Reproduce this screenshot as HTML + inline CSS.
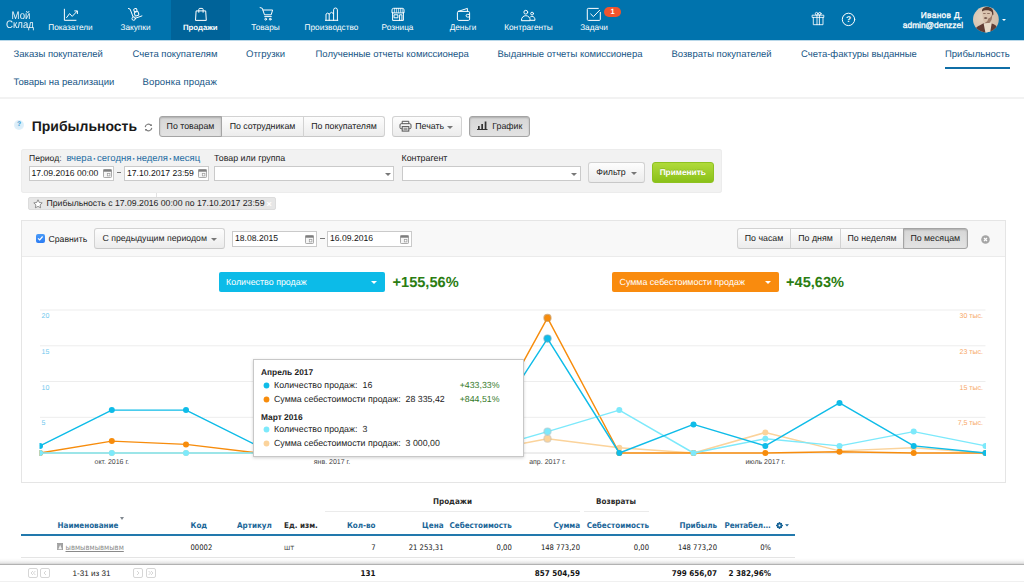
<!DOCTYPE html>
<html lang="ru">
<head>
<meta charset="utf-8">
<title>МойСклад — Прибыльность</title>
<style>
*{box-sizing:border-box;margin:0;padding:0}
html,body{width:1024px;height:582px;overflow:hidden;background:#fff}
body{text-rendering:geometricPrecision;position:relative;font-family:"Liberation Sans","DejaVu Sans",sans-serif;font-size:9.3px;color:#222;line-height:1}
.abs{position:absolute;white-space:nowrap}
/* top bar */
#top{position:absolute;left:0;top:0;width:1024px;height:40px;background:#0073ad}
#top .act{position:absolute;left:171px;top:0;width:59px;height:40px;background:#006399}
.nl{position:absolute;top:22.5px;width:80px;margin-left:-40px;text-align:center;color:#fff;font-size:8.25px;line-height:9px;white-space:nowrap}
.ni{position:absolute;top:6px;width:18px;height:18px;margin-left:-9px}
.ni svg{display:block;width:18px;height:18px;overflow:visible}
/* subnav */
#sub{position:absolute;left:0;top:40px;width:1024px;height:59px;background:#fff;border-top:1px solid #b9d8e9;border-bottom:2px solid #f2f2f2}
.sl{position:absolute;margin-top:-1px;color:#175686;font-size:9.5px;line-height:11px;white-space:nowrap}
/* buttons */
.btn{position:absolute;height:21px;border:1px solid #d2d2d2;border-bottom-color:#c8c8c8;background:linear-gradient(#fdfdfd,#ececec);color:#222;font-size:8.8px;line-height:19.2px;text-align:center;white-space:nowrap;border-radius:3px}
.btn.on{background:linear-gradient(#d6d6d6,#e3e3e3);border-color:#a4a4a4;box-shadow:inset 0 1px 2px rgba(0,0,0,.2);z-index:2}
.inp{position:absolute;height:15px;background:#fff;border:1px solid #cacaca;font-size:8.6px;line-height:12px;padding-left:2px;white-space:nowrap;color:#111}
.lab{position:absolute;font-size:8.9px;line-height:10px;white-space:nowrap;color:#222}
.caret{position:absolute;width:0;height:0;border-left:3px solid transparent;border-right:3px solid transparent;border-top:3px solid #787878}
/* table */
.th{position:absolute;font-family:"DejaVu Sans Condensed","DejaVu Sans","Liberation Sans",sans-serif;font-weight:bold;font-size:8px;line-height:9px;color:#1b6698;white-space:nowrap}
.td{position:absolute;font-family:"DejaVu Sans Condensed","DejaVu Sans","Liberation Sans",sans-serif;font-size:7.6px;line-height:9px;color:#141414;white-space:nowrap}
.r{text-align:right}
.tb{font-weight:bold;font-size:8px}
#plinks i{position:relative;top:0.3px;font-style:normal;font-weight:bold;display:inline-block;width:5.1px;text-align:center;color:#1f6da3}
.pg{width:10px;height:10px;border:1px solid #d6d6d6;border-radius:2px;background:#fff}
</style>
</head>
<body>
<!-- TOPBAR -->
<div id="top">
  <div class="act"></div>
  <div class="abs" id="logo1" style="left:0.7px;top:10.8px;width:40px;text-align:center;color:#fff;font-size:10.9px;line-height:11px;transform:scaleX(.885);opacity:.93">Мой</div>
  <div class="abs" id="logo2" style="left:0.2px;top:19.8px;width:40px;text-align:center;color:#fff;font-size:10.9px;line-height:11px;transform:scaleX(.885);opacity:.93">Склад</div>
  <div class="nl" style="left:70.5px">Показатели</div>
  <div class="nl" style="left:135.5px">Закупки</div>
  <div class="nl" style="left:200.3px;font-weight:bold;font-size:7.8px">Продажи</div>
  <div class="nl" style="left:265.5px">Товары</div>
  <div class="nl" style="left:331.5px">Производство</div>
  <div class="nl" style="left:397.5px">Розница</div>
  <div class="nl" style="left:463px">Деньги</div>
  <div class="nl" style="left:528.5px">Контрагенты</div>
  <div class="nl" style="left:594px">Задачи</div>
  <svg class="abs" id="icons" style="left:0;top:0" width="1024" height="40" viewBox="0 0 1024 40">
    <g fill="none" stroke="#fff" stroke-width="1" stroke-linejoin="round" stroke-linecap="round">
      <!-- pokazateli -->
      <path d="M64.4 9.2V20.3H76"/><path d="M66.6 17.6l3-4 2.6 2.8 4.9-5.2"/><path d="M74.7 10.9h2.7v2.7"/>
      <!-- zakupki -->
      <path d="M128.4 8.5l1.7.6 3 7.8"/><circle cx="133.7" cy="18.6" r="1.7"/><path d="M135.5 18.2l6.4-2.3"/>
      <rect x="134.6" y="11.9" width="4" height="3.8" rx=".8" transform="rotate(-18 136.6 13.8)"/><rect x="133.9" y="8.6" width="3" height="3" rx=".9" transform="rotate(-18 135.4 10.1)"/>
      <!-- prodazhi -->
      <path d="M196.5 10.9h9.2l.6 9.5h-10.4z"/><path d="M198.8 12.3v-2.900a1 1 0 0 1 1-1h2.300a1 1 0 0 1 1 1v2.900"/>
      <!-- tovary -->
      <path d="M260.1 7.6l2.2.7 2.2 6.5h6.7l1.4-4.8h-9.6"/><path d="M264.7 16.6h6.6"/><circle cx="265.7" cy="19.2" r=".9"/><circle cx="270.2" cy="19.2" r=".9"/>
      <!-- proizvodstvo -->
      <path d="M325.4 20.3h12.4"/><path d="M326 20.3v-6.2l1.6-1 1.6 1v6.2"/><path d="M329.2 14.1l2.2-1.8 2.2 1.4"/><path d="M333.6 20.3V9.9a1.9 1.9 0 0 1 3.8 0v10.4"/>
      <!-- roznica -->
      <path d="M392 12.5v-2.6a1.6 1.6 0 0 1 1.6-1.6h8.8a1.6 1.6 0 0 1 1.6 1.6v2.6z"/><path d="M394.4 8.4v4M396.4 8.4v4M398.4 8.4v4M400.4 8.4v4M402.2 8.4v4" stroke-width=".7"/><path d="M392.6 12.5v7.9h10.8v-7.9"/><rect x="394.4" y="14.8" width="3.5" height="3"/><path d="M399.6 20.4v-5.6h2.3v5.6"/>
      <!-- dengi -->
      <rect x="457.4" y="11.4" width="12.2" height="9" rx="1.3"/><path d="M458.2 11.4l9.2-3v3"/><path d="M469.6 14.4h-2.2a1.3 1.3 0 0 0 0 2.6h2.2"/>
      <!-- kontragenty -->
      <circle cx="525.8" cy="12.2" r="1.9"/><path d="M521.4 20.3c0-3 2-4.6 4.4-4.6s4.4 1.6 4.4 4.6z"/><circle cx="532.1" cy="13.6" r="1.4"/><path d="M530.6 16.8c.5-.3 1-.4 1.5-.4 1.7 0 2.9 1.3 2.9 3.9h-4.4"/>
      <!-- zadachi -->
      <path d="M598.3 8.4h-10a1 1 0 0 0-1 1v10a1 1 0 0 0 1 1h11a1 1 0 0 0 1-1v-7"/><path d="M590.7 14l2.7 2.6 6.2-6.3"/>
      <!-- gift -->
      <g stroke-width=".85"><rect x="812.5" y="15.2" width="11.3" height="2.2"/><path d="M813.3 17.4v7.3h9.7v-7.3"/><path d="M817 15.2v9.5M819.4 15.2v9.5"/><circle cx="816.6" cy="13.7" r="1.3"/><circle cx="819.8" cy="13.7" r="1.3"/></g>
      <!-- help -->
      <circle cx="848.5" cy="19.4" r="6.2"/>
    </g>
    <text x="848.5" y="22.4" text-anchor="middle" font-family="'Liberation Sans',sans-serif" font-weight="bold" font-size="8.4" fill="#fff">?</text>
    <!-- avatar -->
    <defs><clipPath id="avc"><circle cx="985.9" cy="19.5" r="12.9"/></clipPath><filter id="avb" x="-10%" y="-10%" width="120%" height="120%"><feGaussianBlur stdDeviation=".55"/></filter>
    <radialGradient id="avg" cx=".35" cy=".4" r=".8"><stop offset="0" stop-color="#e3d3c1"/><stop offset="1" stop-color="#cdb5a0"/></radialGradient></defs>
    <g clip-path="url(#avc)">
      <rect x="972" y="6" width="28" height="28" fill="url(#avg)"/>
      <g filter="url(#avb)">
        <path d="M974 34c.3-5 2.300-7.300 5.500-8.600l4-2.200 5.500-.6 3.500 1.200c3.800 1.300 5.800 3.700 6.300 10.200z" fill="#613c35"/>
        <path d="M983.600 23.300l1.900 9.700h4.600l1.700-10.200z" fill="#e8dccb"/>
        <path d="M982.400 11c0-2 1.800-3 4.800-3s5 1.200 5.200 4.500c.2 3.500-.6 7.300-2.500 9.300-1.600 1.700-4.300 1.700-5.600.2-1.600-1.800-1.900-6.300-1.900-11z" fill="#d9c2ad"/>
        <path d="M982 11.600c-.3-3.200 2.100-4.700 5.300-4.700 3.700 0 6.500 2 6.100 7.600l-.9 1.300-.7-3.700c-1.200-1.500-3-1.900-5-1.900-2.200 0-3.600.4-4.800 1.400z" fill="#573a31"/>
        <path d="M983.200 13.500h2.400M987.200 13.500h2.600" stroke="#7a5a4c" stroke-width=".8" fill="none"/>
        <path d="M983.800 17.900c1.100-.8 2.700-.8 3.700 0-.4 1-3.200 1-3.700 0z" fill="#553830"/>
        <path d="M988.300 18.600c1.700-.6 3.100-2.200 3.700-4.200.5 3.600-.5 6.900-2.500 8.100-1.500.9-3.500.8-4.700-.3 1.500.1 2.900-.4 3.500-3.600z" fill="#8b6858" opacity=".8"/>
      </g>
    </g>
  </svg>
  <div class="abs" id="badge" style="left:604px;top:7px;width:17px;height:10px;border-radius:5px;background:#f2542d;color:#fff;font-size:7.5px;font-weight:bold;line-height:9.5px;text-align:center">1</div>
  <div class="abs" id="uname" style="right:61.5px;top:10.3px;color:#fff;font-size:8.4px;line-height:10px;text-align:right;letter-spacing:.3px;-webkit-text-stroke:.3px #fff">Иванов Д.</div>
  <div class="abs" id="umail" style="right:61px;top:20.2px;color:#fff;font-size:8.4px;line-height:10px;text-align:right;-webkit-text-stroke:.3px #fff">admin@denzzel</div>
  <div class="caret" style="left:1002px;top:18.5px;border-top-color:#fff;border-left-width:2.5px;border-right-width:2.5px;border-top-width:2.5px"></div>
</div>
<!-- SUBNAV -->
<div id="sub">
  <div class="sl" style="left:13.5px;top:9.2px">Заказы покупателей</div>
  <div class="sl" style="left:132.5px;top:9.2px">Счета покупателям</div>
  <div class="sl" style="left:246px;top:9.2px">Отгрузки</div>
  <div class="sl" style="left:315.5px;top:9.2px">Полученные отчеты комиссионера</div>
  <div class="sl" style="left:497.5px;top:9.2px">Выданные отчеты комиссионера</div>
  <div class="sl" style="left:671.5px;top:9.2px">Возвраты покупателей</div>
  <div class="sl" style="left:801px;top:9.2px">Счета-фактуры выданные</div>
  <div class="sl" style="left:945px;top:9.2px">Прибыльность</div>
  <div class="abs" style="left:945px;top:25.5px;width:64.5px;height:2px;background:#0f6ea6"></div>
  <div class="sl" style="left:13.5px;top:37px">Товары на реализации</div>
  <div class="sl" style="left:142.5px;top:37px;letter-spacing:.15px">Воронка продаж</div>
</div>
<!-- TITLE ROW -->
<div id="titlerow">
  <div class="abs" id="hq" style="left:14px;top:120px;width:10px;height:10px;border-radius:5px;background:radial-gradient(#d3eaf8,#e6f3fb);color:#3d9ad0;font-size:6.8px;font-weight:bold;line-height:10px;text-align:center">?</div>
  <div class="abs" id="h1" style="left:31.7px;top:117.6px;font-size:14px;font-weight:bold;line-height:16px;color:#1a1a1a">Прибыльность</div>
  <svg class="abs" id="refresh" style="left:143.5px;top:122.5px" width="9" height="9" viewBox="0 0 9 9"><path d="M1.2 4.1A3.3 3.3 0 0 1 7.2 2.6M7.8 4.9A3.3 3.3 0 0 1 1.8 6.4" fill="none" stroke="#7c7c7c" stroke-width="1.15"/><path d="M7.9 0.9V3.1H5.7zM1.1 8.1V5.9H3.3z" fill="#7c7c7c"/></svg>
  <div class="btn on" style="left:159px;top:116px;width:63px;border-radius:3px 0 0 3px">По товарам</div>
  <div class="btn" style="left:221px;top:116px;width:83px;border-radius:0">По сотрудникам</div>
  <div class="btn" style="left:303px;top:116px;width:82px;border-radius:0 3px 3px 0">По покупателям</div>
  <div class="btn" id="bprint" style="left:392px;top:116px;width:70px;text-align:left;padding-left:22.3px">Печать</div>
  <svg class="abs" id="prn" style="left:399px;top:120px;z-index:3" width="13" height="12" viewBox="0 0 13 12"><g fill="none" stroke="#555" stroke-width="1"><path d="M3.200 3.700V1.300h6.600v2.400"/><rect x="1" y="3.700" width="11" height="5" rx="1.200"/><rect x="3.200" y="6.600" width="6.600" height="4.500" fill="#f6f6f6"/><path d="M4.500 8.300h4M4.500 9.700h4" stroke-width=".7"/></g></svg>
  <div class="caret" style="left:447.300px;top:126px;z-index:3;border-top-color:#777"></div>
  <div class="btn on" id="bgraph" style="left:469px;top:116px;width:61px;text-align:left;padding-left:22.3px">График</div>
  <svg class="abs" id="bars" style="left:477px;top:121px;z-index:3" width="11" height="9" viewBox="0 0 11 9"><g fill="#333"><rect x="0" y="8" width="10.500" height="1"/><rect x="1" y="5" width="1.700" height="3.500"/><rect x="4.300" y="3" width="1.700" height="5.500"/><rect x="7.700" y=".5" width="1.700" height="8"/></g></svg>
</div>
<!-- FILTER -->
<div id="filter">
  <div class="abs" style="left:21px;top:149px;width:700.5px;height:44px;background:#f2f2f2;border-radius:3px;box-shadow:inset 0 0 0 1px #ececec"></div>
  <div class="lab" style="left:29px;top:153px;font-size:8.6px">Период:</div>
  <div class="lab" id="plinks" style="left:66.5px;top:154.3px;color:#1f6da3;font-size:9.5px">вчера<i>·</i>сегодня<i>·</i>неделя<i>·</i>месяц</div>
  <div class="inp" style="left:28.5px;top:166px;width:85px">17.09.2016 00:00</div>
  <svg class="abs cal" style="left:102.5px;top:169px" width="9" height="9" viewBox="0 0 9 9"><rect x=".5" y=".5" width="8" height="8" rx=".8" fill="#f6f6f6" stroke="#969696" stroke-width=".8"/><rect x=".5" y=".5" width="8" height="2.2" fill="#7e7e7e"/><rect x="4.3" y="4.6" width="2.6" height="2.3" fill="#fff" stroke="#9a9a9a" stroke-width=".7"/></svg>
  <div class="abs" style="left:116.5px;top:172px;width:4.5px;height:1px;background:#777"></div>
  <div class="inp" style="left:124px;top:166px;width:85px">17.10.2017 23:59</div>
  <svg class="abs cal" style="left:198px;top:169px" width="9" height="9" viewBox="0 0 9 9"><rect x=".5" y=".5" width="8" height="8" rx=".8" fill="#f6f6f6" stroke="#969696" stroke-width=".8"/><rect x=".5" y=".5" width="8" height="2.2" fill="#7e7e7e"/><rect x="4.3" y="4.6" width="2.6" height="2.3" fill="#fff" stroke="#9a9a9a" stroke-width=".7"/></svg>
  <div class="lab" style="left:214px;top:153px">Товар или группа</div>
  <div class="inp" style="left:214px;top:166px;width:179.5px"></div>
  <div class="caret" style="left:384.5px;top:172.5px"></div>
  <div class="lab" style="left:401.5px;top:153px">Контрагент</div>
  <div class="inp" style="left:401.5px;top:166px;width:179px"></div>
  <div class="caret" style="left:571px;top:172.5px"></div>
  <div class="btn" style="left:588px;top:162px;width:57px;text-align:left;padding-left:7.2px">Фильтр</div>
  <div class="caret" style="left:630.5px;top:172px;z-index:3;border-top-color:#777"></div>
  <div class="abs" id="apply" style="left:652px;top:162px;width:61.5px;height:21px;border-radius:3px;background:linear-gradient(#b0da3a,#8ac119);border:1px solid #8ec220;color:#fff;font-size:8.3px;font-weight:bold;line-height:18.5px;text-align:center;text-shadow:0 -1px 0 rgba(0,0,0,.15)">Применить</div>
  <div class="abs" style="left:156px;top:193px;width:1px;height:4px;background:#e2e2e2"></div>
  <div class="abs" id="tag" style="left:28px;top:197px;width:248px;height:12.5px;border-radius:2px;background:#e6e6e6;border:1px solid #dcdcdc;font-size:8.7px;line-height:11px;padding-left:17.5px;color:#222">Прибыльность с 17.09.2016 00:00 по 17.10.2017 23:59</div>
  <svg class="abs" id="star" style="left:33px;top:198.500px" width="10" height="10" viewBox="0 0 10 10"><path d="M5 .8l1.300 2.700 2.900.4-2.100 2 .5 2.900L5 7.400 2.400 8.800l.5-2.900-2.100-2 2.900-.4z" fill="#fff" stroke="#777" stroke-width=".8" stroke-linejoin="round"/></svg>
  <div class="abs" id="tagx" style="left:266.5px;top:198.500px;color:#fff;font-size:9px;font-weight:bold;line-height:10px">×</div>
</div>
<!-- CHART -->
<div id="chart">
  <div class="abs" style="left:21px;top:220px;width:985px;height:262.5px;border:1px solid #e5e5e5;background:#fff"></div>
  <div class="abs" style="left:22px;top:221px;width:983px;height:35.5px;background:#f8f8f8;border-bottom:1px solid #ebebeb"></div>
  <div class="abs" id="cb" style="left:36px;top:234px;width:8.5px;height:8.5px;border-radius:2px;background:linear-gradient(#4a9bf8,#2b7cf3)"><svg width="8.5" height="8.5" viewBox="0 0 8.5 8.5" style="display:block"><path d="M2 4.4L3.7 6L6.6 2.5" fill="none" stroke="#fff" stroke-width="1.2"/></svg></div>
  <div class="lab" style="left:48.5px;top:233.5px;font-size:8.7px">Сравнить</div>
  <div class="btn" style="left:94px;top:228px;width:131px;text-align:left;padding-left:7.5px;font-size:8.75px">С предыдущим периодом</div>
  <div class="caret" style="left:210.5px;top:238px;z-index:3;border-top-color:#777"></div>
  <div class="inp" style="left:232px;top:231px;width:85px;height:16px;line-height:13.6px;padding-left:2px">18.08.2015</div>
  <svg class="abs cal" style="left:305.2px;top:234.5px" width="9" height="9" viewBox="0 0 9 9"><rect x=".5" y=".5" width="8" height="8" rx=".8" fill="#f6f6f6" stroke="#969696" stroke-width=".8"/><rect x=".5" y=".5" width="8" height="2.2" fill="#7e7e7e"/><rect x="4.3" y="4.6" width="2.6" height="2.3" fill="#fff" stroke="#9a9a9a" stroke-width=".7"/></svg>
  <div class="abs" style="left:320px;top:238px;width:4.5px;height:1px;background:#777"></div>
  <div class="inp" style="left:327px;top:231px;width:85px;height:16px;line-height:13.6px;padding-left:2px">16.09.2016</div>
  <svg class="abs cal" style="left:399.5px;top:234.5px" width="9" height="9" viewBox="0 0 9 9"><rect x=".5" y=".5" width="8" height="8" rx=".8" fill="#f6f6f6" stroke="#969696" stroke-width=".8"/><rect x=".5" y=".5" width="8" height="2.2" fill="#7e7e7e"/><rect x="4.3" y="4.6" width="2.6" height="2.3" fill="#fff" stroke="#9a9a9a" stroke-width=".7"/></svg>
  <div class="btn" style="left:737px;top:228px;width:54px;border-radius:3px 0 0 3px">По часам</div>
  <div class="btn" style="left:790px;top:228px;width:51px;border-radius:0">По дням</div>
  <div class="btn" style="left:840px;top:228px;width:64px;border-radius:0">По неделям</div>
  <div class="btn on" style="left:903px;top:228px;width:64.5px;border-radius:0 3px 3px 0">По месяцам</div>
  <svg class="abs" style="left:981px;top:234.5px" width="9" height="9" viewBox="0 0 9 9"><circle cx="4.5" cy="4.5" r="4.3" fill="#a6a6a6"/><path d="M3 3L6 6M6 3L3 6" stroke="#fff" stroke-width="1.2"/></svg>
  <div class="abs dd" style="left:218.5px;top:272px;width:166.5px;height:19.5px;border-radius:2px;background:#0cbbe8;color:#fff;font-size:8.9px;line-height:20.4px;padding-left:7.5px">Количество продаж</div>
  <div class="caret" style="left:371px;top:280.5px;border-top-color:#fff"></div>
  <div class="abs pct" style="left:392.5px;top:275.2px;color:#2b7d12;font-size:14.6px;font-weight:bold;line-height:17px">+155,56%</div>
  <div class="abs dd" style="left:612px;top:272px;width:166.5px;height:19.5px;border-radius:2px;background:#f98b0e;color:#fff;font-size:8.9px;line-height:20.4px;padding-left:7.5px">Сумма себестоимости продаж</div>
  <div class="caret" style="left:764.5px;top:280.5px;border-top-color:#fff"></div>
  <div class="abs pct" style="left:786px;top:275.2px;color:#2b7d12;font-size:14.6px;font-weight:bold;line-height:17px">+45,63%</div>
  <svg class="abs" id="plot" style="left:0;top:0" width="1024" height="582" viewBox="0 0 1024 582">
    <g stroke="#ededed" stroke-width="1">
      <line x1="40" x2="985.5" y1="310" y2="310"/><line x1="40" x2="985.5" y1="345.8" y2="345.8"/><line x1="40" x2="985.5" y1="381.5" y2="381.5"/><line x1="40" x2="985.5" y1="417.3" y2="417.3"/>
    </g>
    <line x1="40" x2="985.5" y1="453" y2="453" stroke="#dcdcdc" stroke-width="1"/>
    <g font-family="'Liberation Sans',sans-serif" font-size="7" fill="#6fc8ee">
      <text x="41.5" y="318">20</text><text x="41.5" y="353.8">15</text><text x="41.5" y="389.5">10</text><text x="41.5" y="425.3">5</text>
    </g>
    <g font-family="'Liberation Sans',sans-serif" font-size="7" fill="#f7a766" text-anchor="end">
      <text x="983" y="318">30 тыс.</text><text x="983" y="353.8">23 тыс.</text><text x="983" y="389.5">15 тыс.</text><text x="983" y="425.3">7,5 тыс.</text>
    </g>
    <g font-family="'Liberation Sans',sans-serif" font-size="7" fill="#444" text-anchor="middle">
      <text x="111.8" y="464">окт. 2016 г.</text><text x="332" y="464">янв. 2017 г.</text><text x="547.5" y="464">апр. 2017 г.</text><text x="765.3" y="464">июль 2017 г.</text>
    </g>
<defs><clipPath id="pc"><rect x="39.5" y="300" width="946.5" height="160"/></clipPath></defs>
<g clip-path="url(#pc)">
<polyline points="40.0,453.0 111.8,453.0 186.0,453.0 257.8,453.0 332.0,453.0 406.2,453.0 473.3,453.0 547.5,438.7 619.3,447.8 693.5,453.0 765.3,432.5 839.5,450.9 913.7,447.8 985.5,453.0" fill="none" stroke="#fbd39b" stroke-width="1.45" stroke-linejoin="round"/>
<g fill="#fbd39b"><circle cx="40.0" cy="453.0" r="3"/><circle cx="111.8" cy="453.0" r="3"/><circle cx="186.0" cy="453.0" r="3"/><circle cx="257.8" cy="453.0" r="3"/><circle cx="332.0" cy="453.0" r="3"/><circle cx="406.2" cy="453.0" r="3"/><circle cx="473.3" cy="453.0" r="3"/><circle cx="547.5" cy="438.7" r="3"/><circle cx="619.3" cy="447.8" r="3"/><circle cx="693.5" cy="453.0" r="3"/><circle cx="765.3" cy="432.5" r="3"/><circle cx="839.5" cy="450.9" r="3"/><circle cx="913.7" cy="447.8" r="3"/><circle cx="985.5" cy="453.0" r="3"/></g>
<polyline points="40.0,453.0 111.8,441.1 186.0,444.4 257.8,453.0 332.0,453.0 406.2,453.0 473.3,453.0 547.5,317.9 619.3,453.0 693.5,453.0 765.3,453.0 839.5,451.8 913.7,453.0 985.5,453.0" fill="none" stroke="#f78c0c" stroke-width="1.45" stroke-linejoin="round"/>
<g fill="#f78c0c"><circle cx="40.0" cy="453.0" r="3"/><circle cx="111.8" cy="441.1" r="3"/><circle cx="186.0" cy="444.4" r="3"/><circle cx="257.8" cy="453.0" r="3"/><circle cx="332.0" cy="453.0" r="3"/><circle cx="406.2" cy="453.0" r="3"/><circle cx="473.3" cy="453.0" r="3"/><circle cx="547.5" cy="317.9" r="3"/><circle cx="619.3" cy="453.0" r="3"/><circle cx="693.5" cy="453.0" r="3"/><circle cx="765.3" cy="453.0" r="3"/><circle cx="839.5" cy="451.8" r="3"/><circle cx="913.7" cy="453.0" r="3"/><circle cx="985.5" cy="453.0" r="3"/></g>
<polyline points="40.0,453.0 111.8,453.0 186.0,453.0 257.8,453.0 332.0,453.0 406.2,453.0 473.3,453.0 547.5,431.6 619.3,410.1 693.5,453.0 765.3,438.7 839.5,445.9 913.7,431.6 985.5,445.9" fill="none" stroke="#7de9fb" stroke-width="1.45" stroke-linejoin="round"/>
<g fill="#7de9fb"><circle cx="40.0" cy="453.0" r="3"/><circle cx="111.8" cy="453.0" r="3"/><circle cx="186.0" cy="453.0" r="3"/><circle cx="257.8" cy="453.0" r="3"/><circle cx="332.0" cy="453.0" r="3"/><circle cx="406.2" cy="453.0" r="3"/><circle cx="473.3" cy="453.0" r="3"/><circle cx="547.5" cy="431.6" r="3"/><circle cx="619.3" cy="410.1" r="3"/><circle cx="693.5" cy="453.0" r="3"/><circle cx="765.3" cy="438.7" r="3"/><circle cx="839.5" cy="445.9" r="3"/><circle cx="913.7" cy="431.6" r="3"/><circle cx="985.5" cy="445.9" r="3"/></g>
<polyline points="40.0,445.9 111.8,410.1 186.0,410.1 257.8,445.9 332.0,453.0 406.2,453.0 473.3,453.0 547.5,338.6 619.3,453.0 693.5,424.4 765.3,445.9 839.5,402.9 913.7,445.9 985.5,453.0" fill="none" stroke="#0fbce8" stroke-width="1.45" stroke-linejoin="round"/>
<g fill="#0fbce8"><circle cx="40.0" cy="445.9" r="3"/><circle cx="111.8" cy="410.1" r="3"/><circle cx="186.0" cy="410.1" r="3"/><circle cx="257.8" cy="445.9" r="3"/><circle cx="332.0" cy="453.0" r="3"/><circle cx="406.2" cy="453.0" r="3"/><circle cx="473.3" cy="453.0" r="3"/><circle cx="547.5" cy="338.6" r="3"/><circle cx="619.3" cy="453.0" r="3"/><circle cx="693.5" cy="424.4" r="3"/><circle cx="765.3" cy="445.9" r="3"/><circle cx="839.5" cy="402.9" r="3"/><circle cx="913.7" cy="445.9" r="3"/><circle cx="985.5" cy="453.0" r="3"/></g>
</g>

    <g>
      <circle cx="547.5" cy="438.7" r="4.1" fill="#cdbfa8" opacity=".7"/><circle cx="547.5" cy="438.7" r="3" fill="#fbd39b"/>
      <circle cx="547.5" cy="431.6" r="4.1" fill="#9fc7cf" opacity=".7"/><circle cx="547.5" cy="431.6" r="3" fill="#7de9fb"/>
      <circle cx="547.5" cy="317.9" r="4.1" fill="#c98a3c" opacity=".7"/><circle cx="547.5" cy="317.9" r="3" fill="#f78c0c"/>
      <circle cx="547.5" cy="338.6" r="4.1" fill="#3f9fbd" opacity=".7"/><circle cx="547.5" cy="338.6" r="3" fill="#0fbce8"/>
    </g>
  </svg>
  <div class="abs" id="tip" style="left:253px;top:359px;width:271px;height:98px;background:#fff;border:1px solid #c8c8c8;box-shadow:0 1px 3px rgba(0,0,0,.18);font-size:8.8px;color:#222">
    <div class="abs" style="left:7px;top:7px;font-weight:bold;line-height:11px;font-size:8.35px">Апрель 2017</div>
    <svg class="abs dot" style="left:8.5px;top:21.5px" width="7" height="7" viewBox="0 0 7 7"><circle cx="3.5" cy="3.5" r="2.9" fill="#0fbce8"/></svg>
    <div class="abs" style="left:20px;top:19.9px;line-height:11px;letter-spacing:.06px">Количество продаж:&nbsp; 16</div>
    <div class="abs" style="right:23.5px;top:19.9px;line-height:11px;color:#35792a">+433,33%</div>
    <svg class="abs dot" style="left:8.5px;top:35.5px" width="7" height="7" viewBox="0 0 7 7"><circle cx="3.5" cy="3.5" r="2.9" fill="#f78c0c"/></svg>
    <div class="abs" style="left:20px;top:33.5px;line-height:11px">Сумма себестоимости продаж:&nbsp; 28 335,42</div>
    <div class="abs" style="right:23.5px;top:33.5px;line-height:11px;color:#35792a">+844,51%</div>
    <div class="abs" style="left:7px;top:51.6px;font-weight:bold;line-height:11px;font-size:8.35px">Март 2016</div>
    <svg class="abs dot" style="left:8.5px;top:66.0px" width="7" height="7" viewBox="0 0 7 7"><circle cx="3.5" cy="3.5" r="2.9" fill="#7de9fb"/></svg>
    <div class="abs" style="left:20px;top:64.4px;line-height:11px;letter-spacing:.06px">Количество продаж:&nbsp; 3</div>
    <svg class="abs dot" style="left:8.5px;top:80.0px" width="7" height="7" viewBox="0 0 7 7"><circle cx="3.5" cy="3.5" r="2.9" fill="#fbd39b"/></svg>
    <div class="abs" style="left:20px;top:78px;line-height:11px">Сумма себестоимости продаж:&nbsp; 3 000,00</div>
  </div>
</div>
<!-- TABLE -->
<div id="table">
  <div class="abs" style="left:325px;top:511px;width:255px;height:1px;background:#ebebeb"></div>
  <div class="abs" style="left:584px;top:511px;width:65px;height:1px;background:#ebebeb"></div>
  <div class="th" style="left:412.5px;top:496.5px;width:80px;text-align:center;color:#2b2b2b">Продажи</div>
  <div class="th" style="left:576px;top:496.5px;width:80px;text-align:center;color:#2b2b2b">Возвраты</div>
  <div class="th" style="left:57.5px;top:520.5px">Наименование</div>
  <div class="caret" style="left:120px;top:516.5px;border-left-width:2.5px;border-right-width:2.5px;border-top-width:3px;border-top-color:#808890"></div>
  <div class="th" style="left:190.5px;top:520.5px">Код</div>
  <div class="th" style="left:237px;top:520.5px">Артикул</div>
  <div class="th" style="left:284px;top:520.5px;color:#2b2b2b">Ед. изм.</div>
  <div class="th r" style="right:648.5px;top:520.5px">Кол-во</div>
  <div class="th r" style="right:580.5px;top:520.5px">Цена</div>
  <div class="th r" style="right:512.2px;top:520.5px">Себестоимость</div>
  <div class="th r" style="right:444px;top:520.5px">Сумма</div>
  <div class="th r" style="right:375px;top:520.5px">Себестоимость</div>
  <div class="th r" style="right:307px;top:520.5px">Прибыль</div>
  <div class="th" style="left:724.5px;top:520.5px;letter-spacing:-.12px">Рентабел...</div>
  <svg class="abs" id="gear" style="left:776px;top:521.5px" width="7" height="7" viewBox="0 0 7 7"><circle cx="3.5" cy="3.5" r="2.1" fill="none" stroke="#1b6698" stroke-width="1.6"/><path d="M3.5 0v7M0 3.5h7M1 1l5 5M6 1L1 6" stroke="#1b6698" stroke-width="1"/><circle cx="3.5" cy="3.5" r="1" fill="#fff"/></svg>
  <svg class="abs" style="left:784.6px;top:524px" width="4" height="3" viewBox="0 0 4 3"><path d="M0 .3h4L2 2.600z" fill="#1b6698"/></svg>
  <div class="abs" style="left:21px;top:534px;width:774px;height:2px;background:#2279ad"></div>
  <svg class="abs" id="ico" style="left:57.2px;top:542.6px" width="6.3" height="7.6" viewBox="0 0 7 9"><rect x=".3" y=".3" width="6.400" height="8.200" fill="#a3a3a3" stroke="#8a8a8a" stroke-width=".6"/><path d="M1.300 7.300L3.500 2.200l2.200 5.100z" fill="#f4f4f4"/></svg>
  <div class="td" style="left:65.5px;top:542.5px;color:#8a8a8a;text-decoration:underline;font-size:7.6px">ывмывмывмывм</div>
  <div class="td" style="left:190.5px;top:542.5px">00002</div>
  <div class="td" style="left:284px;top:542.5px;color:#444">шт</div>
  <div class="td r" style="right:648.5px;top:542.5px">7</div>
  <div class="td r" style="right:580.5px;top:542.5px">21 253,31</div>
  <div class="td r" style="right:512.2px;top:542.5px">0,00</div>
  <div class="td r" style="right:444px;top:542.5px">148 773,20</div>
  <div class="td r" style="right:375px;top:542.5px">0,00</div>
  <div class="td r" style="right:307px;top:542.5px">148 773,20</div>
  <div class="td r" style="right:253px;top:542.5px">0%</div>
  <div class="abs" style="left:21px;top:557px;width:774px;height:1px;background:#e4e4e4"></div>
</div>
<!-- FOOTER -->
<div id="footer">
  <div class="abs" style="left:0;top:558px;width:1024px;height:6px;background:linear-gradient(rgba(0,0,0,0),rgba(0,0,0,.025) 40%,rgba(0,0,0,.09) 80%,rgba(0,0,0,.17))"></div>
  <div class="abs" style="left:0;top:564px;width:1024px;height:18px;background:#fff;border-top:1px solid #b2b2b2;border-bottom:1px solid #f0f0f0"></div>
  <div class="abs pg" style="left:28px;top:568px"><svg width="8" height="8" viewBox="0 0 8 8" style="display:block"><g fill="none" stroke="#cdcdcd" stroke-width=".8"><polyline points="4 2 2 4 4 6"/><polyline points="6.4 2 4.4 4 6.4 6"/></g></svg></div>
  <div class="abs pg" style="left:40px;top:568px"><svg width="8" height="8" viewBox="0 0 8 8" style="display:block"><g fill="none" stroke="#cdcdcd" stroke-width=".8"><polyline points="5 2 3 4 5 6"/></g></svg></div>
  <div class="abs pg" style="left:133px;top:568px"><svg width="8" height="8" viewBox="0 0 8 8" style="display:block"><g fill="none" stroke="#cdcdcd" stroke-width=".8"><polyline points="3 2 5 4 3 6"/></g></svg></div>
  <div class="abs pg" style="left:145.5px;top:568px"><svg width="8" height="8" viewBox="0 0 8 8" style="display:block"><g fill="none" stroke="#cdcdcd" stroke-width=".8"><polyline points="1.6 2 3.600 4 1.6 6"/><polyline points="4 2 6 4 4 6"/></g></svg></div>
  <div class="abs" style="left:72.5px;top:569px;font-size:8.1px;line-height:10px;color:#222">1-31 из 31</div>
  <div class="td r tb" style="right:648.5px;top:568.5px">131</div>
  <div class="td r tb" style="right:444px;top:568.5px">857 504,59</div>
  <div class="td r tb" style="right:307px;top:568.5px">799 656,07</div>
  <div class="td r tb" style="right:253px;top:568.5px">2 382,96%</div>
</div>
</body>
</html>
